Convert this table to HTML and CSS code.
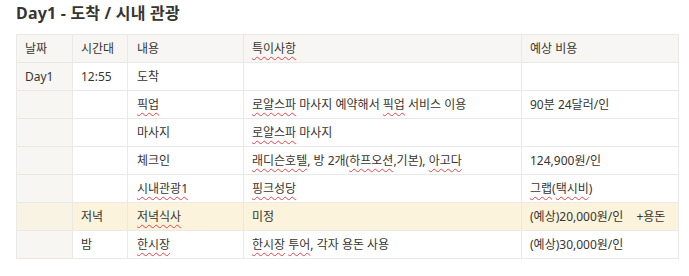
FILE: index.html
```html
<!DOCTYPE html>
<html lang="ko">
<head>
<meta charset="utf-8">
<title>Day1</title>
<link rel="stylesheet" href="styles.css">
</head>
<body>
<div class="page">
  <h1 class="title">Day1 - 도착 / 시내 관광</h1>
  <table class="plan">
    <colgroup>
      <col class="c1"><col class="c2"><col class="c3"><col class="c4"><col class="c5">
    </colgroup>
    <thead>
      <tr class="head">
        <td class="first">날짜</td><td>시간대</td><td>내용</td><td><span class="sp">특이사항</span></td><td>예상 비용</td>
      </tr>
    </thead>
    <tbody>
      <tr>
        <td class="first">Day1</td><td>12:55</td><td>도착</td><td></td><td></td>
      </tr>
      <tr>
        <td class="first"></td><td></td><td><span class="sp">픽업</span></td><td><span class="sp">로얄스파</span> 마사지 예약해서 <span class="sp">픽업</span> 서비스 이용</td><td>90분 24달러/인</td>
      </tr>
      <tr>
        <td class="first"></td><td></td><td>마사지</td><td><span class="sp">로얄스파</span> 마사지</td><td></td>
      </tr>
      <tr>
        <td class="first"></td><td></td><td>체크인</td><td><span class="sp">래디슨호텔</span>, 방 2개(<span class="sp">하프오션</span>,기본), <span class="sp">아고다</span></td><td>124,900원/인</td>
      </tr>
      <tr>
        <td class="first"></td><td></td><td><span class="sp">시내관광1</span></td><td><span class="sp">핑크성당</span></td><td><span class="sp">그랩</span>(<span class="sp">택시비</span>)</td>
      </tr>
      <tr class="hl">
        <td class="first"></td><td>저녁</td><td><span class="sp">저녁식사</span></td><td>미정</td><td>(예상)20,000원/인<span class="extra">+용돈</span></td>
      </tr>
      <tr>
        <td class="first"></td><td>밤</td><td><span class="sp">한시장</span></td><td><span class="sp">한시장</span> <span class="sp">투어</span>, 각자 용돈 사용</td><td>(예상)30,000원/인</td>
      </tr>
    </tbody>
  </table>
</div>
</body>
</html>
```
FILE: styles.css
```css
html, body {
  margin: 0;
  padding: 0;
  background: #ffffff;
}
body {
  font-family: "Noto Sans", "Noto Sans CJK KR", sans-serif;
  color: #37352f;
}
.page {
  padding: 1px 16px 0 16px;
}
.title {
  margin: 0 0 9px 0;
  font-size: 16px;
  line-height: 24px;
  font-weight: 700;
  font-family: "Noto Sans", "Noto Sans CJK KR", sans-serif;
  letter-spacing: 0.2px;
}
.plan {
  border-collapse: collapse;
  table-layout: fixed;
  width: 662px;
  font-size: 12px;
  letter-spacing: 0;
}
.c1 { width: 56px; }
.c2 { width: 55px; }
.c3 { width: 116px; }
.c4 { width: 278px; }
.c5 { width: 157px; }
.plan td {
  border: 1px solid #e9e9e7;
  height: 27px;
  padding: 0 8px;
  line-height: 16px;
  vertical-align: middle;
  white-space: nowrap;
  overflow: hidden;
}
.plan td:nth-child(3) {
  padding-left: 9px;
}
.head td {
  background: #f7f6f3;
}
.first {
  background: #f7f6f3;
}
.hl td {
  background: #fbf3db;
}
.hl td.first {
  background: #f9f3e3;
}
.sp {
  text-decoration-line: underline;
  text-decoration-style: wavy;
  text-decoration-color: #e8414a;
  text-decoration-thickness: 1px;
  text-underline-offset: 3px;
}
.extra {
  margin-left: 13px;
}
```
